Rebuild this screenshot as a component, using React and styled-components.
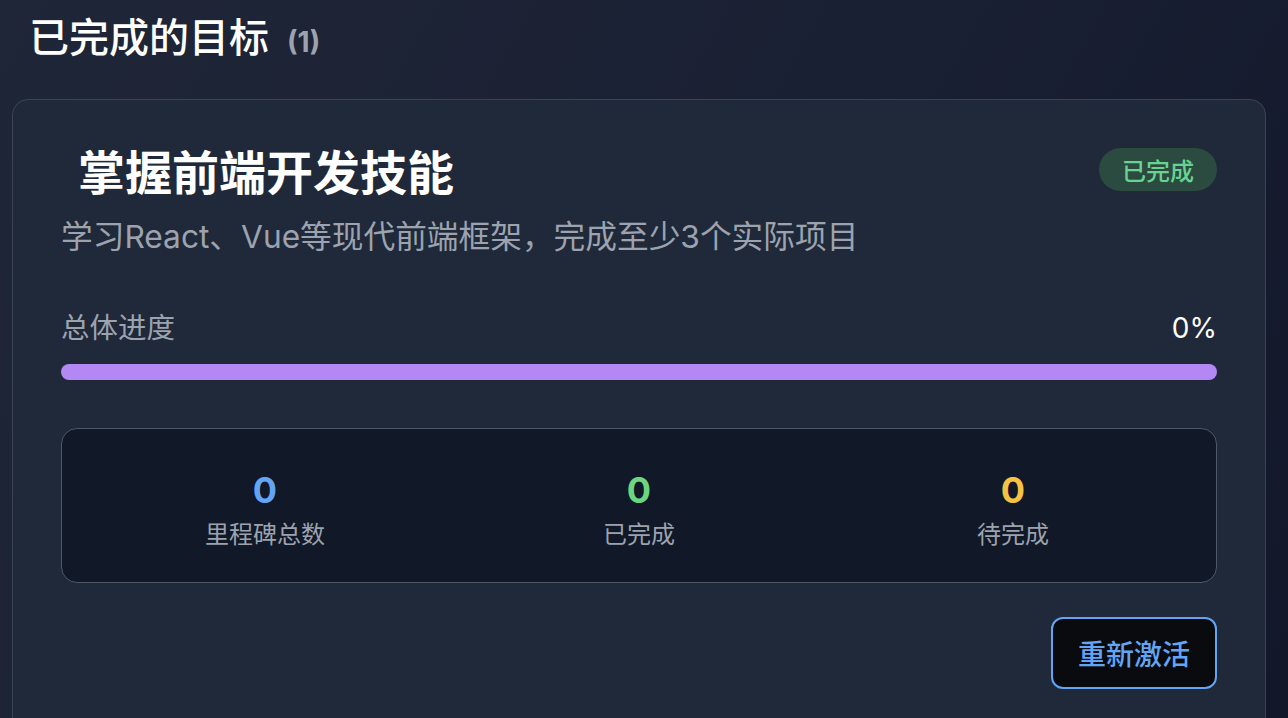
import React from 'react'
import styled, { createGlobalStyle } from 'styled-components'

const GlobalStyle = createGlobalStyle`
    html, body {
        margin: 0;
        padding: 0;
    }
    body {
        background: linear-gradient(120deg, #1f2637 0%, #1a2033 55%, #12172a 100%);
        min-height: 100vh;
        font-family: Inter, "Noto Sans CJK SC", sans-serif;
        color: #f9fafb;
        overflow: hidden;
    }
`

const Page = styled.div`
    padding: 14px 22px 0 12px;
    height: 718px;
    box-sizing: border-box;
`

const Heading = styled.h2`
    margin: 0 0 33px 0;
    padding-left: 17px;
    font-size: 40px;
    line-height: 48px;
    font-weight: 500;
    color: #ffffff;
    display: flex;
    align-items: baseline;
    gap: 18px;
`

const Count = styled.span`
    font-size: 28px;
    font-weight: 700;
    color: #9ca3af;
`

const Card = styled.div`
    background: #1f2939;
    border: 1px solid #3a4455;
    border-radius: 16px;
    padding: 48px;
`

const TitleRow = styled.div`
    display: flex;
    justify-content: space-between;
    align-items: flex-start;
`

const Title = styled.h3`
    margin: 0;
    padding-left: 17px;
    font-size: 47px;
    line-height: 49px;
    font-weight: 700;
    color: #ffffff;
`

const Badge = styled.span`
    height: 43px;
    padding: 0 23px;
    border-radius: 22px;
    display: flex;
    align-items: center;
    background: #2b4a40;
    color: #68d391;
    font-size: 24px;
    font-weight: 500;
`

const Description = styled.p`
    margin: 17px 0 0 0;
    font-size: 31.7px;
    line-height: 45px;
    color: #9ca3af;
`

const ProgressHeader = styled.div`
    margin-top: 48px;
    display: flex;
    justify-content: space-between;
    align-items: center;
    font-size: 28.5px;
    line-height: 42px;
`

const ProgressLabel = styled.span`
    color: #9ca3af;
`

const ProgressValue = styled.span`
    color: #ffffff;
    font-size: 28px;
`

const Track = styled.div`
    margin-top: 15px;
    height: 16px;
    border-radius: 8px;
    background: #b388f4;
`

const Stats = styled.div`
    margin-top: 48px;
    background: #111827;
    border: 1px solid #4e5869;
    border-radius: 16px;
    padding: 34px 24px 29px;
    display: grid;
    grid-template-columns: repeat(3, 1fr);
    gap: 16px;
`

const Stat = styled.div`
    display: flex;
    flex-direction: column;
    align-items: center;
`

const StatNumber = styled.span`
    font-size: 36px;
    line-height: 54px;
    font-weight: 700;
    color: ${props => props.color};
`

const StatLabel = styled.span`
    font-size: 24px;
    line-height: 36px;
    color: #9ca3af;
`

const Actions = styled.div`
    margin-top: 34px;
    display: flex;
    justify-content: flex-end;
`

const Button = styled.button`
    height: 72px;
    padding: 0 25px;
    border: 2px solid #63a4f4;
    border-radius: 12px;
    background: #0a0b0f;
    color: #63a4f4;
    font-family: Inter, "Noto Sans CJK SC", sans-serif;
    font-size: 28px;
    font-weight: 500;
    cursor: pointer;
`

const stats = [
    { value: 0, label: '里程碑总数', color: '#63a4f4' },
    { value: 0, label: '已完成', color: '#6bd67f' },
    { value: 0, label: '待完成', color: '#f5c242' },
]

export default function App() {
    return (
        <>
            <GlobalStyle />
            <Page>
                <Heading>
                    已完成的目标
                    <Count>(1)</Count>
                </Heading>
                <Card>
                    <TitleRow>
                        <Title>掌握前端开发技能</Title>
                        <Badge>已完成</Badge>
                    </TitleRow>
                    <Description>学习React、Vue等现代前端框架，完成至少3个实际项目</Description>
                    <ProgressHeader>
                        <ProgressLabel>总体进度</ProgressLabel>
                        <ProgressValue>0%</ProgressValue>
                    </ProgressHeader>
                    <Track />
                    <Stats>
                        {stats.map(s => (
                            <Stat key={s.label}>
                                <StatNumber color={s.color}>{s.value}</StatNumber>
                                <StatLabel>{s.label}</StatLabel>
                            </Stat>
                        ))}
                    </Stats>
                    <Actions>
                        <Button>重新激活</Button>
                    </Actions>
                </Card>
            </Page>
        </>
    )
}
